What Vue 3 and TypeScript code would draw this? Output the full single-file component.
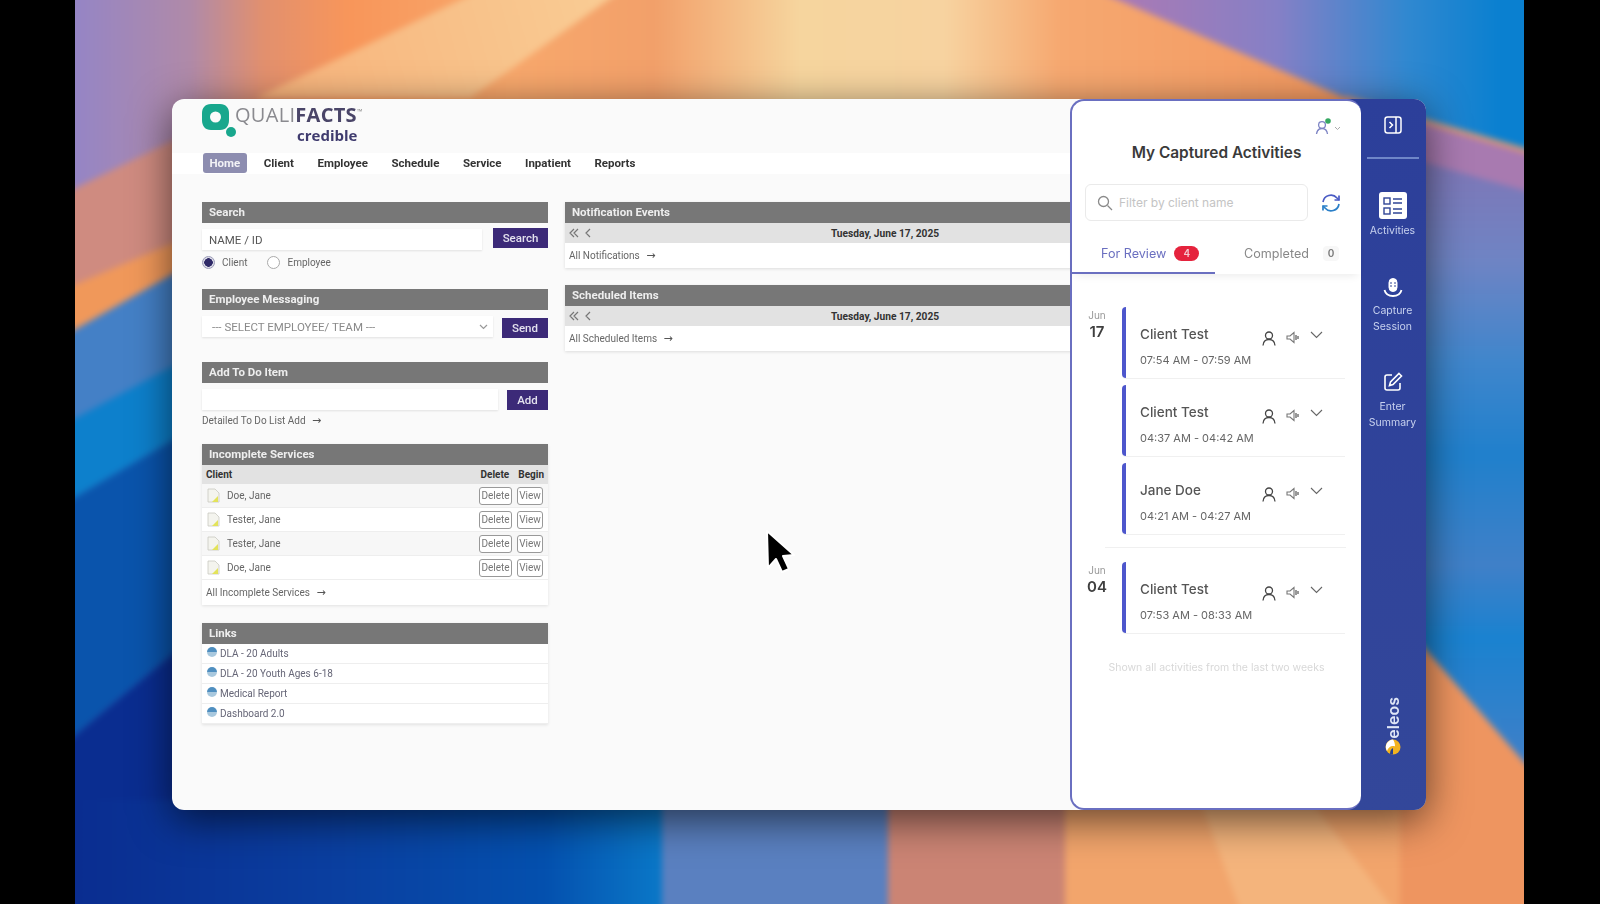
<template>
  <div class="desktop">
    <svg class="wallpaper" viewBox="55 -20 1489 944" preserveAspectRatio="none">
      <defs>
        <linearGradient id="sky" gradientUnits="userSpaceOnUse" x1="75" y1="0" x2="1524" y2="0">
          <stop offset="0" stop-color="#9585c5" />
          <stop offset="0.08" stop-color="#b08aa8" />
          <stop offset="0.13" stop-color="#e2906e" />
          <stop offset="0.19" stop-color="#f8965a" />
          <stop offset="0.3" stop-color="#f8a86c" />
          <stop offset="0.4" stop-color="#f2a06a" />
          <stop offset="0.5" stop-color="#f6d59e" />
          <stop offset="0.6" stop-color="#f7d3a0" />
          <stop offset="0.68" stop-color="#f6a870" />
          <stop offset="1" stop-color="#f08d55" />
        </linearGradient>
        <linearGradient id="plane" gradientUnits="userSpaceOnUse" x1="256" y1="98" x2="610" y2="0">
          <stop offset="0" stop-color="#f8b27a" />
          <stop offset="1" stop-color="#f9cc94" />
        </linearGradient>
        <linearGradient id="peak" gradientUnits="userSpaceOnUse" x1="1130" y1="0" x2="1500" y2="0">
          <stop offset="0" stop-color="#a87ab5" />
          <stop offset="0.4" stop-color="#8580c6" />
          <stop offset="0.75" stop-color="#3088d0" />
          <stop offset="1" stop-color="#0a80d0" />
        </linearGradient>
        <linearGradient id="bottomBlue" gradientUnits="userSpaceOnUse" x1="75" y1="0" x2="662" y2="0">
          <stop offset="0" stop-color="#0a2d90" />
          <stop offset="0.45" stop-color="#0a3fa0" />
          <stop offset="0.8" stop-color="#0450ae" />
          <stop offset="1" stop-color="#0a78c8" />
        </linearGradient>
        <linearGradient id="rightBlue" gradientUnits="userSpaceOnUse" x1="0" y1="150" x2="0" y2="760">
          <stop offset="0" stop-color="#8075b5" />
          <stop offset="0.18" stop-color="#6f84c4" />
          <stop offset="0.35" stop-color="#3f86cc" />
          <stop offset="0.5" stop-color="#2080cc" />
          <stop offset="0.68" stop-color="#4080c8" />
          <stop offset="0.8" stop-color="#1a82d0" />
          <stop offset="1" stop-color="#3f80c8" />
        </linearGradient>
      </defs>
      <rect x="55" y="-20" width="1489" height="944" fill="url(#sky)" />
      <polygon points="256,98 502,-20 636,-20 470,98" fill="url(#plane)" />
      <polygon points="1072,-20 1544,-20 1544,156 1345,98" fill="url(#peak)" />
      <polygon points="55,198 180,137 180,240 55,293" fill="#cf8b80" />
      <polygon points="55,293 180,240 180,270 55,341" fill="#f0985a" />
      <polygon points="55,341 180,270 180,362 55,429" fill="#4480c6" />
      <polygon points="55,429 180,362 180,436 55,509" fill="#0d80cc" />
      <polygon points="55,509 180,436 180,648 55,752" fill="#0a54ac" />
      <polygon points="55,752 180,648 180,924 55,924" fill="#0a2d90" />
      <rect x="55" y="800" width="607" height="124" fill="url(#bottomBlue)" />
      <rect x="662" y="800" width="226" height="124" fill="#5a80c0" />
      <rect x="888" y="800" width="177" height="124" fill="#cb8474" />
      <rect x="1065" y="800" width="335" height="124" fill="#f2a56c" />
      <polygon points="1200,800 1310,800 1405,924 1245,924" fill="#f4b47c" />
      <rect x="1400" y="800" width="144" height="124" fill="#ee8e5e" />
      <polygon points="1345,98 1544,156 1544,780 1345,700" fill="url(#rightBlue)" />
      <polygon points="1345,96 1544,154 1544,196 1345,140" fill="#a87ab0" />
      <polygon points="1345,96 1544,154 1544,158 1345,100" fill="#f0a060" />
      <polygon points="1400,620 1544,785 1544,924 1400,924" fill="#ee9560" />
    </svg>

    <div class="window">
      <main class="main">
        <div class="logo">
          <svg class="logo-mark" width="36" height="36" viewBox="0 0 36 36">
            <path fill-rule="evenodd" fill="#18a78d" d="M9 0h9c6 0 9 4 9 9v7c0 6-3 10-9 10H9c-6 0-9-4-9-10V9C0 4 3 0 9 0zm4.500 7.500a5.500 5.500 0 1 0 0 11 5.500 5.500 0 0 0 0-11z" />
            <circle cx="29" cy="28" r="5" fill="#18a78d" />
          </svg>
          <div class="logo-text">
            <div class="logo-name">QUALI<b>FACTS</b><sup>™</sup></div>
            <div class="logo-sub">credible</div>
          </div>
        </div>

        <nav class="nav">
          <a v-for="item in navItems" :key="item" class="nav-item" :class="{ active: item === 'Home' }">{{ item }}</a>
        </nav>

        <div class="columns">
          <div class="col-left">
            <section class="box box-search">
              <h3 class="box-title">Search</h3>
              <div class="row row-search">
                <input class="field field-name" placeholder="NAME / ID" />
                <button class="btn btn-search">Search</button>
              </div>
              <div class="radios">
                <span class="radio on"></span><span class="radio-label">Client</span>
                <span class="radio"></span><span class="radio-label">Employee</span>
              </div>
            </section>

            <section class="box box-msg">
              <h3 class="box-title">Employee Messaging</h3>
              <div class="row row-msg">
                <div class="field select">
                  <span>--- SELECT EMPLOYEE/ TEAM ---</span>
                  <svg width="9" height="6" viewBox="0 0 9 6"><path d="M1 1l3.5 3.5L8 1" fill="none" stroke="#999" stroke-width="1.2" /></svg>
                </div>
                <button class="btn btn-send">Send</button>
              </div>
            </section>

            <section class="box box-todo">
              <h3 class="box-title">Add To Do Item</h3>
              <div class="row row-todo">
                <input class="field field-todo" />
                <button class="btn btn-add">Add</button>
              </div>
              <a class="more more-todo">Detailed To Do List Add <span class="arrow">→</span></a>
            </section>

            <section class="box box-inc">
              <h3 class="box-title">Incomplete Services</h3>
              <div class="table-head">
                <span class="th-client">Client</span>
                <span class="th-delete">Delete</span>
                <span class="th-begin">Begin</span>
              </div>
              <div v-for="(name, i) in services" :key="i" class="service" :class="{ odd: i % 2 === 0 }">
                <svg class="doc" width="13" height="15" viewBox="0 0 13 15">
                  <path d="M1 1h7l4 4v9H1z" fill="#f4f4ee" stroke="#c9c9c0" stroke-width="0.8" />
                  <path d="M5 14l6-6v6z" fill="#e3e35a" />
                </svg>
                <span class="service-name">{{ name }}</span>
                <button class="mini mini-delete">Delete</button>
                <button class="mini mini-view">View</button>
              </div>
              <a class="more more-inc">All Incomplete Services <span class="arrow">→</span></a>
            </section>

            <section class="box box-links">
              <h3 class="box-title">Links</h3>
              <div v-for="link in links" :key="link" class="link">
                <span class="globe"></span>
                <span>{{ link }}</span>
              </div>
            </section>
          </div>

          <div class="col-right">
            <section v-for="block in dateBlocks" :key="block.title" class="box box-date">
              <h3 class="box-title">{{ block.title }}</h3>
              <div class="date-row">
                <span class="pager">
                  <svg width="24" height="10" viewBox="0 0 24 10">
                    <path d="M5 1L1 5l4 4M9 1L5 5l4 4M21 1l-4 4 4 4" fill="none" stroke="#777" stroke-width="1.2" />
                  </svg>
                </span>
                <span class="date">Tuesday, June 17, 2025</span>
              </div>
              <a class="more more-date">{{ block.link }} <span class="arrow">→</span></a>
            </section>
          </div>
        </div>
      </main>

      <aside class="panel">
        <div class="panel-user">
          <svg width="26" height="18" viewBox="0 0 26 18">
            <circle cx="7" cy="7" r="3.4" fill="none" stroke="#7d84c4" stroke-width="1.3" />
            <path d="M1.5 16c.5-4 2.5-5.5 5.5-5.5s5 1.500 5.500 5.500" fill="none" stroke="#7d84c4" stroke-width="1.300" />
            <circle cx="13" cy="3" r="2.800" fill="#35a862" />
            <path d="M20 9l2.500 2.500L25 9" fill="none" stroke="#aaa" stroke-width="1" />
          </svg>
        </div>
        <h2 class="panel-title">My Captured Activities</h2>
        <div class="panel-search">
          <div class="filter">
            <svg width="16" height="16" viewBox="0 0 16 16">
              <circle cx="6.500" cy="6.500" r="5" fill="none" stroke="#8a8a8a" stroke-width="1.300" />
              <path d="M10.500 10.500L15 15" stroke="#8a8a8a" stroke-width="1.300" />
            </svg>
            <span>Filter by client name</span>
          </div>
          <svg class="refresh" width="20" height="20" viewBox="0 0 20 20" fill="none" stroke-width="1.700">
            <path d="M2 9a8 8 0 0 1 14-4l2 2" stroke="#4a5bc4" />
            <path d="M18 2.500V7h-4.500" stroke="#4a5bc4" />
            <path d="M18 11a8 8 0 0 1-14 4l-2-2" stroke="#2a7fc8" />
            <path d="M2 17.500V13h4.500" stroke="#2a7fc8" />
          </svg>
        </div>
        <div class="tabs">
          <div class="tab active">For Review <span class="count red">4</span></div>
          <div class="tab">Completed <span class="count">0</span></div>
        </div>

        <div class="activity-list">
          <div v-for="group in groups" :key="group.day" class="group">
            <div class="group-date">
              <span class="month">Jun</span>
              <span class="day">{{ group.day }}</span>
            </div>
            <div class="cards">
              <div v-for="card in group.cards" :key="card.time" class="card">
                <div class="card-text">
                  <div class="card-name">{{ card.name }}</div>
                  <div class="card-time">{{ card.time }}</div>
                </div>
                <div class="card-icons">
                  <svg width="14" height="15" viewBox="0 0 14 15" fill="none" stroke="#444" stroke-width="1.300">
                    <circle cx="7" cy="4.500" r="3.500" />
                    <path d="M1 14.500c.3-4 2.500-6 6-6s5.700 2 6 6" />
                  </svg>
                  <svg width="14" height="13" viewBox="0 0 14 13" fill="none" stroke="#777" stroke-width="1.100">
                    <path d="M1 5v3h3l4 3.500v-10L4 5z" />
                    <path d="M10 4v5M12 5v3" stroke-width="1.500" />
                  </svg>
                  <svg class="chev" width="13" height="8" viewBox="0 0 13 8" fill="none" stroke="#666" stroke-width="1.100">
                    <path d="M1 1l5.500 5.500L12 1" />
                  </svg>
                </div>
              </div>
            </div>
          </div>
          <p class="list-note">Shown all activities from the last two weeks</p>
        </div>
      </aside>

      <aside class="rail">
        <svg class="rail-toggle" width="20" height="20" viewBox="0 0 20 20" fill="none" stroke="#fff" stroke-width="1.500">
          <rect x="2" y="2" width="16" height="16" rx="2.500" />
          <path d="M13 2v16M6.500 7l3 3-3 3" />
        </svg>
        <div class="rail-divider"></div>
        <div class="rail-tile">
          <svg width="20" height="18" viewBox="0 0 20 18" fill="none" stroke="#2f4596" stroke-width="1.400">
            <rect x="1" y="1" width="6" height="6" />
            <rect x="1" y="11" width="6" height="6" />
            <path d="M10 2h9M10 6h9M10 12h9M10 16h9" />
          </svg>
        </div>
        <span class="rail-label">Activities</span>
        <svg class="rail-icon icon-capture" width="22" height="22" viewBox="0 0 22 22" fill="none" stroke="#fff">
          <rect x="7" y="1.500" width="8" height="13" rx="4" fill="#fff" />
          <path d="M8 6h2M12 6h2M8 9h2M12 9h2" stroke="#2f4596" stroke-width="1" />
          <path d="M2.500 13c1 4 4 6 8.500 6s7.500-2 8.500-6" stroke-width="1.800" />
        </svg>
        <span class="rail-label">Capture<br />Session</span>
        <svg class="rail-icon icon-enter" width="20" height="20" viewBox="0 0 20 20" fill="none" stroke="#fff" stroke-width="1.600">
          <path d="M17 11v5a2 2 0 0 1-2 2H4a2 2 0 0 1-2-2V5a2 2 0 0 1 2-2h5" />
          <path d="M16 1.500l2.500 2.500L10 12.500l-3.500 1 1-3.500z" />
        </svg>
        <span class="rail-label label-enter">Enter<br />Summary</span>
        <div class="eleos">
          <span class="eleos-text">eleos</span>
          <svg width="16" height="16" viewBox="0 0 16 16">
            <circle cx="8" cy="8" r="7.500" fill="#f2b31f" />
            <path d="M8 .5A7.500 7.500 0 0 0 2 12c1-3 3-5 6-5 1 0 1.500 0 2 .5C10 4 9 2 8 .5z" fill="#fff" />
            <path d="M5 15c0-3 1-5 3-6v6.500z" fill="#27408f" />
          </svg>
        </div>
      </aside>

      <svg class="cursor" width="32" height="46" viewBox="-2 -2 32 46">
        <path d="M0 0L27 24L16 25L22 38L15 41L9 28L1 37Z" fill="#000" stroke="#fff" stroke-width="2" stroke-linejoin="round" />
      </svg>
    </div>
  </div>
</template>

<script setup lang="ts">
interface Card {
  name: string
  time: string
}

interface Group {
  day: string
  cards: Card[]
}

const navItems = ['Home', 'Client', 'Employee', 'Schedule', 'Service', 'Inpatient', 'Reports']

const services = ['Doe, Jane', 'Tester, Jane', 'Tester, Jane', 'Doe, Jane']

const links = ['DLA - 20 Adults', 'DLA - 20 Youth Ages 6-18', 'Medical Report', 'Dashboard 2.0']

const dateBlocks = [
  { title: 'Notification Events', link: 'All Notifications' },
  { title: 'Scheduled Items', link: 'All Scheduled Items' }
]

const groups: Group[] = [
  {
    day: '17',
    cards: [
      { name: 'Client Test', time: '07:54 AM - 07:59 AM' },
      { name: 'Client Test', time: '04:37 AM - 04:42 AM' },
      { name: 'Jane Doe', time: '04:21 AM - 04:27 AM' }
    ]
  },
  {
    day: '04',
    cards: [{ name: 'Client Test', time: '07:53 AM - 08:33 AM' }]
  }
]
</script>

<style>
html,
body {
  margin: 0;
  background: #000;
}
</style>

<style scoped>
.desktop {
  position: relative;
  width: 1449px;
  height: 904px;
  margin: 0 76px 0 75px;
  padding: 99px 0 0 97px;
  box-sizing: border-box;
  overflow: hidden;
  font-family: Roboto, "Liberation Sans", sans-serif;
}

.wallpaper {
  position: absolute;
  left: -20px;
  top: -20px;
  width: 1489px;
  height: 944px;
  filter: blur(3px);
}

.window {
  position: relative;
  display: flex;
  width: 1254px;
  height: 711px;
  border-radius: 12px;
  overflow: hidden;
  background: #fafafa;
  filter: blur(0.6px);
}

.desktop::after {
  content: '';
  position: absolute;
  left: 97px;
  top: 99px;
  width: 1254px;
  height: 711px;
  border-radius: 12px;
  box-shadow: 0 10px 40px rgba(0, 0, 0, 0.6);
  pointer-events: none;
}

.main {
  flex: 1;
  min-width: 0;
  overflow: hidden;
}

.logo {
  display: flex;
  padding: 5px 0 0 30px;
  height: 53.5px;
  box-sizing: border-box;
}

.logo-mark {
  flex-shrink: 0;
}

.logo-text {
  margin-left: -3px;
}

.logo-name {
  font-family: "Open Sans", sans-serif;
  font-size: 20px;
  line-height: 22px;
  color: #8a8a8f;
  letter-spacing: 0.3px;
}

.logo-name b {
  color: #4a4568;
  font-weight: 700;
}

.logo-name sup {
  font-size: 7px;
  line-height: 0;
  color: #888;
}

.logo-sub {
  margin: 1px 0 0 62px;
  font-family: "Open Sans", sans-serif;
  font-size: 15px;
  font-weight: 700;
  line-height: 17px;
  color: #3f3b6e;
}

.nav {
  display: flex;
  align-items: center;
  height: 21px;
  padding-left: 31px;
  background: #fff;
}

.nav-item {
  margin-right: 23.5px;
  font-size: 11.5px;
  font-weight: 700;
  color: #333;
}

.nav-item.active {
  padding: 3px 6.5px;
  margin-right: 17px;
  border-radius: 3px;
  background: #8d8db0;
  color: #f2f2f6;
}

.columns {
  display: flex;
  gap: 17px;
  margin-top: 28.5px;
  padding-left: 30px;
}

.col-left {
  width: 346px;
  flex-shrink: 0;
}

.col-right {
  width: 640px;
  flex-shrink: 0;
}

.box-title {
  height: 21px;
  margin: 0;
  padding-left: 7px;
  background: #777;
  color: #eee;
  font-size: 11.5px;
  font-weight: 700;
  line-height: 21px;
}

.box-search {
  margin-bottom: 19px;
}

.box-msg {
  margin-bottom: 24px;
}

.box-todo {
  margin-bottom: 16px;
}

.box-inc {
  margin-bottom: 18px;
}

.box-date {
  margin-bottom: 17px;
  background: #fff;
  box-shadow: 0 1px 3px rgba(0, 0, 0, 0.12);
}

.row {
  display: flex;
  justify-content: space-between;
  align-items: flex-start;
}

.field {
  box-sizing: border-box;
  height: 21px;
  border: 0;
  outline: 0;
  background: #fff;
  font-family: inherit;
  box-shadow: 0 1px 2px rgba(0, 0, 0, 0.1);
}

.field::placeholder {
  color: #555;
  opacity: 1;
}

.row-search {
  margin-top: 4px;
}

.field-name {
  width: 280px;
  margin-top: 2px;
  padding: 0 7px;
  font-size: 11.5px;
}

.btn {
  height: 20px;
  padding: 0;
  border: 0;
  background: #3c2a78;
  color: #e4e2ee;
  font-family: inherit;
  font-size: 11.5px;
  font-weight: 500;
}

.btn-search {
  width: 55px;
  margin-top: 1px;
}

.btn-send {
  width: 46px;
  margin-top: 2px;
}

.btn-add {
  width: 41px;
  margin-top: 1px;
}

.radios {
  display: flex;
  align-items: center;
  height: 16px;
  margin-top: 4px;
  margin-bottom: 2px;
  font-size: 10px;
  color: #666;
}

.radio {
  box-sizing: border-box;
  width: 13px;
  height: 13px;
  margin-right: 7px;
  border: 1px solid #aaa;
  border-radius: 50%;
  background: #fff;
}

.radio.on {
  border-color: #9a9ab8;
  background: radial-gradient(circle, #2f2a68 0 4px, #dcdce6 4.500px);
}

.radio-label {
  margin-right: 20px;
}

.row-msg {
  margin-top: 6px;
}

.select {
  display: flex;
  align-items: center;
  justify-content: space-between;
  width: 291px;
  padding: 0 5px 0 10px;
  font-size: 11.5px;
  color: #8a8a8a;
}

.row-todo {
  margin-top: 6px;
}

.field-todo {
  width: 296px;
}

.more {
  display: block;
  font-size: 10px;
  color: #666;
}

.more-todo {
  height: 14px;
  margin-top: 4px;
  line-height: 14px;
}

.arrow {
  margin-left: 4px;
  font-family: "DejaVu Sans", sans-serif;
  font-size: 11px;
  color: #555;
}

.table-head {
  position: relative;
  display: flex;
  align-items: center;
  height: 19px;
  padding: 0 4px;
  background: #e2e2e2;
  font-size: 10px;
  font-weight: 700;
  color: #333;
}

.th-client {
  flex: 1;
}

.th-delete {
  margin-right: 9px;
}

.box-inc,
.box-links {
  background: #fff;
  box-shadow: 0 1px 3px rgba(0, 0, 0, 0.1);
}

.service {
  display: flex;
  align-items: center;
  height: 24px;
  padding: 0 5px;
  box-sizing: border-box;
  border-bottom: 1px solid #eee;
  background: #fff;
}

.service.odd {
  background: #f7f7f7;
}

.doc {
  margin-right: 7px;
}

.service-name {
  flex: 1;
  font-size: 10px;
  color: #666;
}

.mini {
  box-sizing: border-box;
  height: 18px;
  padding: 0;
  border: 1px solid #999;
  border-radius: 3px;
  background: #fff;
  font-family: inherit;
  font-size: 10px;
  color: #777;
}

.mini-delete {
  width: 33px;
  margin-right: 5px;
}

.mini-view {
  width: 26px;
}

.more-inc {
  height: 25px;
  padding-left: 4px;
  line-height: 25px;
}

.link {
  display: flex;
  align-items: center;
  height: 20px;
  padding-left: 5px;
  box-sizing: border-box;
  border-bottom: 1px solid #eee;
  font-size: 10px;
  color: #667;
}

.globe {
  width: 10px;
  height: 10px;
  margin: -4px 3px 0 0;
  border-radius: 50%;
  background: linear-gradient(#4f8fc0 55%, #a8c8de 55%);
}

.date-row {
  position: relative;
  display: flex;
  align-items: center;
  justify-content: center;
  height: 20px;
  background: #e2e2e2;
}

.pager {
  position: absolute;
  left: 4px;
  top: 5px;
  line-height: 0;
}

.date {
  font-size: 10.2px;
  font-weight: 700;
  color: #333;
}

.more-date {
  height: 25px;
  padding-left: 4px;
  line-height: 25px;
}

.panel {
  position: relative;
  z-index: 1;
  box-sizing: border-box;
  flex-shrink: 0;
  width: 291px;
  padding-top: 17px;
  border: 2px solid #6a6fc0;
  border-right-width: 0;
  border-radius: 14px;
  background: #fff;
  font-family: Inter, "Liberation Sans", sans-serif;
}

.panel-user {
  display: flex;
  justify-content: flex-end;
  height: 18px;
  padding-right: 20px;
}

.panel-title {
  height: 20px;
  margin: 7px 0 0;
  font-size: 15.4px;
  font-weight: 600;
  line-height: 20px;
  text-align: center;
  color: #3a3a3a;
}

.panel-search {
  display: flex;
  align-items: center;
  margin-top: 21px;
  padding-left: 13px;
}

.filter {
  display: flex;
  align-items: center;
  box-sizing: border-box;
  width: 223px;
  height: 37px;
  padding-left: 11px;
  border: 1px solid #eaeaea;
  border-radius: 6px;
  font-size: 12px;
  color: #c4c4c4;
}

.filter span {
  margin-left: 6px;
}

.refresh {
  margin-left: 13px;
}

.tabs {
  display: flex;
  height: 39px;
  margin-top: 14px;
  box-shadow: 0 6px 8px -4px rgba(0, 0, 0, 0.08);
}

.tab {
  display: flex;
  align-items: center;
  box-sizing: border-box;
  width: 143px;
  padding: 0 0 3px 29px;
  font-size: 12.6px;
  color: #888;
}

.tab.active {
  border-bottom: 2px solid #6a6fc0;
  padding-bottom: 1px;
  color: #6a6fc0;
}

.count {
  display: inline-flex;
  align-items: center;
  justify-content: center;
  width: 16px;
  height: 15px;
  margin-left: 14px;
  border-radius: 4px;
  background: #f7f7f7;
  font-size: 10px;
  font-weight: 600;
  color: #777;
}

.count.red {
  width: 25px;
  margin-left: 8px;
  border-radius: 8px;
  background: #e5233d;
  color: #f5c8cf;
}

.activity-list {
  padding-top: 33px;
}

.group {
  display: flex;
  padding-bottom: 14px;
  margin-bottom: 14px;
  position: relative;
}

.group:first-child::after {
  content: '';
  position: absolute;
  left: 33px;
  right: 15px;
  bottom: 0;
  height: 1px;
  background: #f0f0f0;
}

.group-date {
  display: flex;
  flex-direction: column;
  align-items: center;
  width: 50px;
  flex-shrink: 0;
  padding-top: 2px;
}

.month {
  font-size: 10px;
  line-height: 13px;
  color: #999;
}

.day {
  font-size: 15px;
  font-weight: 600;
  line-height: 20px;
  color: #3f3f3f;
}

.cards {
  display: flex;
  flex-direction: column;
  gap: 7px;
  width: 223px;
}

.card {
  display: flex;
  box-sizing: border-box;
  height: 71px;
  padding: 18px 0 0 14px;
  border-left: 4px solid #4d56cc;
  border-radius: 4px 0 0 4px;
  box-shadow: 0 1px 0 #f0f0f0;
}

.card-text {
  width: 122px;
}

.card-name {
  font-size: 13.5px;
  font-weight: 500;
  line-height: 18px;
  color: #555;
}

.card-time {
  margin-top: 9px;
  font-size: 11px;
  line-height: 16px;
  color: #666;
  white-space: nowrap;
}

.card-icons {
  display: flex;
  align-items: flex-start;
  gap: 10px;
  padding-top: 6px;
}

.chev {
  margin-top: 0;
}

.list-note {
  margin: 0;
  font-size: 10.5px;
  line-height: 14px;
  text-align: center;
  color: #d8d8d8;
}

.rail {
  display: flex;
  flex-direction: column;
  align-items: center;
  width: 79px;
  flex-shrink: 0;
  margin-left: -14px;
  padding: 16px 2px 0 14px;
  box-sizing: border-box;
  background: linear-gradient(#2c3f9a, #33479a);
  font-family: Inter, "Liberation Sans", sans-serif;
}

.rail-divider {
  width: 52px;
  height: 2px;
  margin-top: 22px;
  background: #6f86c8;
}

.rail-tile {
  display: flex;
  align-items: center;
  justify-content: center;
  width: 28px;
  height: 27px;
  margin-top: 33px;
  border-radius: 3px;
  background: #fff;
}

.rail-label {
  margin-top: 4px;
  font-size: 10.5px;
  line-height: 16px;
  text-align: center;
  color: #c7d1ee;
}

.icon-capture {
  margin-top: 38px;
}

.icon-enter {
  margin-top: 37px;
}

.label-enter {
  margin-top: 7px;
}

.eleos {
  display: flex;
  flex-direction: column;
  align-items: center;
  margin-top: auto;
  padding-bottom: 55px;
}

.eleos-text {
  writing-mode: vertical-rl;
  transform: rotate(180deg);
  font-size: 16px;
  font-weight: 600;
  line-height: 18px;
  color: #dfe6f6;
}

.cursor {
  position: absolute;
  z-index: 2;
  left: 593px;
  top: 430px;
}
</style>
